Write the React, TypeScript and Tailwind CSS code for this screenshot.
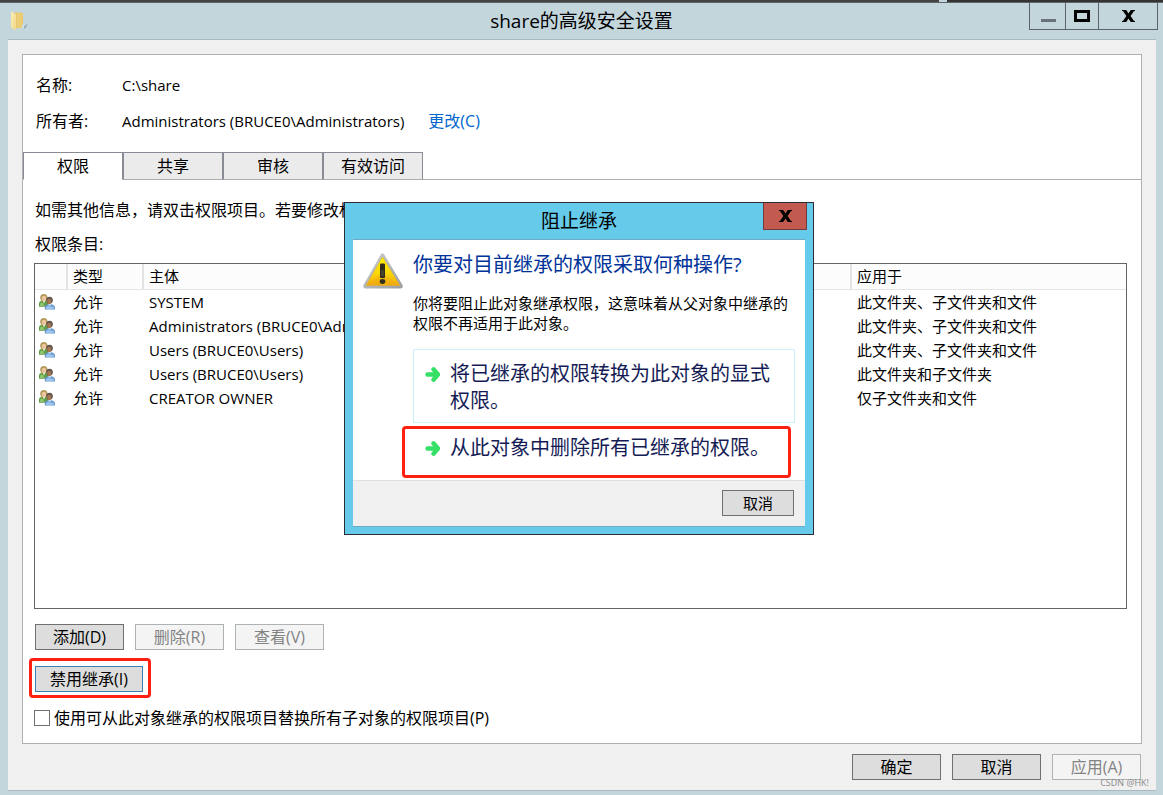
import { useState } from "react";

type Entry = {
  type: string;
  principal: string;
  appliesTo: string;
};

const entries: Entry[] = [
  { type: "允许", principal: "SYSTEM", appliesTo: "此文件夹、子文件夹和文件" },
  { type: "允许", principal: "Administrators (BRUCE0\\Administrators)", appliesTo: "此文件夹、子文件夹和文件" },
  { type: "允许", principal: "Users (BRUCE0\\Users)", appliesTo: "此文件夹、子文件夹和文件" },
  { type: "允许", principal: "Users (BRUCE0\\Users)", appliesTo: "此文件夹和子文件夹" },
  { type: "允许", principal: "CREATOR OWNER", appliesTo: "仅子文件夹和文件" },
];

const tabs = ["权限", "共享", "审核", "有效访问"];

const FolderIcon: React.FC = () => (
  <svg width="18" height="20" viewBox="0 0 18 20" aria-hidden="true">
    <defs>
      <linearGradient id="folder-back" x1="0" y1="0" x2="1" y2="0">
        <stop offset="0" stopColor="#dcbd66" />
        <stop offset="0.35" stopColor="#eed07a" />
        <stop offset="1" stopColor="#e9c968" />
      </linearGradient>
      <linearGradient id="folder-front" x1="0" y1="0" x2="1" y2="1">
        <stop offset="0" stopColor="#faedb0" />
        <stop offset="1" stopColor="#f0d988" />
      </linearGradient>
    </defs>
    <path d="M11 17.500l5.500-5-1.500 4-3 1.800z" fill="#93a7b0" />
    <path d="M4 1l8 1v14.500l-7.500 1z" fill="url(#folder-back)" />
    <path d="M0 0.500L5 3v16.200L0 16.500z" fill="url(#folder-front)" />
    <path d="M11 13.500l2 .5v3.500l-2 .5z" fill="#cfe0ea" />
  </svg>
);

const UsersIcon: React.FC = () => (
  <svg width="16" height="16" viewBox="0 0 16 16" aria-hidden="true" className="block">
    <path d="M0 12.800V9.800C0 8 1.200 7 3 6.800h3.500l2.500 2v4z" fill="#5f9c43" />
    <path d="M1 12V9.800l1.500-1.600L5 9.500V12z" fill="#8dc56c" />
    <ellipse cx="4.800" cy="3.700" rx="3.600" ry="3.700" fill="#b3985a" />
    <ellipse cx="5" cy="4.600" rx="2.200" ry="2.800" fill="#ecc69e" />
    <path d="M3.800 7h2.400L5.300 9.200z" fill="#e6efdc" />
    <path d="M5.800 15.600v-2c0-2 1.400-3 3.200-3.400h3.500c2 .4 3.500 1.600 3.500 3.400v2z" fill="#6496cf" />
    <path d="M7 15v-1.800l2-1.700 3 1.300 2.500-.3.500 2.500z" fill="#9cc3ec" />
    <ellipse cx="10.500" cy="6.200" rx="3.300" ry="3.400" fill="#5f544c" />
    <ellipse cx="10.300" cy="7.400" rx="2.100" ry="2.700" fill="#a57450" />
    <path d="M9.300 10.200h2.900l-1.200 2z" fill="#dfeaf6" />
  </svg>
);

const WarningIcon: React.FC = () => (
  <svg width="40" height="36" viewBox="0 0 40 36" aria-hidden="true" className="block">
    <defs>
      <linearGradient id="warn-fill" x1="0" y1="0" x2="0" y2="1">
        <stop offset="0" stopColor="#fdf000" />
        <stop offset="0.55" stopColor="#fbd808" />
        <stop offset="1" stopColor="#f0aa10" />
      </linearGradient>
      <linearGradient id="warn-edge" x1="0" y1="0" x2="1" y2="1">
        <stop offset="0" stopColor="#cfd2d4" />
        <stop offset="1" stopColor="#9a9da0" />
      </linearGradient>
    </defs>
    <path d="M17.800 1.500q1.700-2.400 3.400 0L39.500 32q1 3.200-2 3.500h-35Q-.5 35.200.5 32z" fill="url(#warn-edge)" />
    <path d="M19.500 4L37 32.500H3z" fill="url(#warn-fill)" stroke="#e0b020" strokeWidth="0.500" />
    <path d="M19.500 20L36 32H3.600z" fill="#f0a30c" opacity="0.300" />
    <rect x="17" y="10.500" width="5" height="14.500" rx="1" fill="#2f2c1c" />
    <rect x="18" y="17" width="3" height="6" fill="#5b5a3c" opacity="0.500" />
    <ellipse cx="19.500" cy="28.500" rx="2.800" ry="2.400" fill="#33301e" />
  </svg>
);

const ArrowIcon: React.FC = () => (
  <svg width="16" height="16" viewBox="0 0 16 16" aria-hidden="true" className="block">
    <path d="M3.500 8.500h9M9.500 3.300L14 8.500l-4.500 5.200" fill="none" stroke="#36e066" strokeWidth="4.400" strokeLinecap="round" strokeLinejoin="round" />
  </svg>
);

const CrossIcon: React.FC = () => (
  <svg width="13" height="12" viewBox="0 0 13 12" aria-hidden="true">
    <path d="M0 0h4.300l2.200 3.400L8.700 0H13v1h-1L8.600 6l3.400 5h1v1H8.700L6.500 8.600 4.300 12H0v-1h1l3.400-5L1 1H0z" fill="#000" />
  </svg>
);

type PushButtonProps = {
  children: React.ReactNode;
  disabled?: boolean;
  className?: string;
};

const PushButton: React.FC<PushButtonProps> = ({ children, disabled, className = "w-[89px] border-[#707070]" }) => (
  <button
    type="button"
    disabled={disabled}
    className={`h-[26px] border bg-[#dddddd] leading-6 disabled:border-[#adb2b5] disabled:bg-[#f4f4f4] disabled:text-[#838383] ${className}`}
  >
    {children}
  </button>
);

const InheritanceDialog: React.FC = () => (
  <div
    role="dialog"
    aria-labelledby="dialog-title"
    className="absolute left-[344px] top-[202px] w-[470px] border border-[#2b2d33] bg-[#66caea] px-2 pb-[7px]"
  >
    <div className="relative flex h-9 items-center justify-center">
      <h2 id="dialog-title" className="text-[19px] leading-6">阻止继承</h2>
      <button
        type="button"
        aria-label="关闭"
        className="absolute -right-0.5 top-0 flex h-[27px] w-11 items-center justify-center border border-t-0 border-[#733a3a] bg-[#c35a50]"
      >
        <CrossIcon />
      </button>
    </div>

    <div className="border-y border-[#6fa9c4] bg-white">
      <div className="flex gap-2.5 pb-[3px] pl-2.5 pr-2.5 pt-[13px]">
        <div>
          <WarningIcon />
        </div>
        <div className="min-w-0 flex-1">
          <h3 className="text-xl leading-6 text-[#003399]">你要对目前继承的权限采取何种操作?</h3>
          <p className="mt-4 text-[15px] leading-5">
            你将要阻止此对象继承权限，这意味着从父对象中继承的权限不再适用于此对象。
          </p>
          <button
            type="button"
            className="mt-4 flex w-full gap-2.5 border border-[#ccf3fa] px-2.5 pb-2 pt-2.5 text-left text-xl leading-[27px] text-[#151c55]"
          >
            <span className="pt-1.5">
              <ArrowIcon />
            </span>
            <span>将已继承的权限转换为此对象的显式权限。</span>
          </button>
          <div className="relative">
            <button
              type="button"
              className="flex w-full gap-2.5 border border-transparent px-2.5 pb-[15px] pt-2.5 text-left text-xl leading-[27px] text-[#151c55]"
            >
              <span className="pt-1.5">
                <ArrowIcon />
              </span>
              <span>从此对象中删除所有已继承的权限。</span>
            </button>
            {/* Highlight frame */}
            <div className="pointer-events-none absolute -left-[11px] right-1 top-[3px] h-[52px] rounded border-3 border-[#ff2010]" />
          </div>
        </div>
      </div>
      <div className="flex justify-end border-t border-[#dfdfdf] bg-[#f0f0f0] px-[11px] pb-2.5 pt-[9px] text-[15px]">
        <PushButton className="w-[72px] border-[#707070]">取消</PushButton>
      </div>
    </div>
  </div>
);

const App: React.FC = () => {
  const [activeTab, setActiveTab] = useState("权限");
  const [replaceAll, setReplaceAll] = useState(false);

  return (
    <div className="relative flex min-h-screen flex-col bg-[#c3d6dc] font-['Open_Sans','Noto_Sans_CJK_SC',sans-serif] text-[15px] text-black">
      {/* Edge of the desktop behind the window */}
      <div className="flex h-[3px] border-b border-[#5e626b] bg-[#333333]">
        <div className="w-[939px] bg-[#444444]" />
        <div className="w-2 bg-[#c3d6dc]" />
      </div>

      {/* Title bar */}
      <header className="relative flex h-9 items-center justify-center">
        <div className="absolute left-[11px] top-2">
          <FolderIcon />
        </div>
        <h1 className="text-[19px] leading-6">share的高级安全设置</h1>
        <div className="absolute right-[5px] top-0 flex h-[27px] border border-t-0 border-[#5e626b]">
          <button type="button" aria-label="最小化" className="flex w-[35px] items-end justify-end pb-[7px] pr-[9px]">
            <span className="h-[3px] w-[15px] bg-[#6a7478]" />
          </button>
          <button type="button" aria-label="最大化" className="flex w-[34px] items-center justify-center border-x border-[#5e626b]">
            <span className="h-3 w-4 border-3 border-black" />
          </button>
          <button type="button" aria-label="关闭" className="flex w-[58px] items-center justify-center">
            <CrossIcon />
          </button>
        </div>
      </header>

      <div className="mb-1 ml-2 mr-[7px] flex flex-1 flex-col border-y border-[#a9b9bf] bg-[#f0f0f0] px-3.5 pb-2.5 pt-3.5">
        <main className="flex flex-1 flex-col border border-[#b0b0b0] bg-white">
          <dl className="grid grid-cols-[86px_1fr] gap-y-3 px-[13px] pb-[19px] pt-[18px] leading-6">
            <dt className="text-base leading-6">名称:</dt>
            <dd>C:\share</dd>
            <dt className="text-base leading-6">所有者:</dt>
            <dd className="flex gap-6">
              Administrators (BRUCE0\Administrators)
              <a href="#change" className="text-base leading-6 text-[#0066cc]">更改(C)</a>
            </dd>
          </dl>

          <div role="tablist" className="flex text-base">
            {tabs.map((tab) => (
              <button
                key={tab}
                type="button"
                role="tab"
                aria-selected={tab === activeTab}
                onClick={() => setActiveTab(tab)}
                className="h-7 w-[100px] border border-b-[#adadad] border-l-[#898c95] border-r-[#898c95] border-t-[#898c95] bg-[#ebebeb] leading-6 aria-selected:border-b-white aria-selected:bg-white"
              >
                {tab}
              </button>
            ))}
            <div className="flex-1 border-b border-[#adadad]" />
          </div>

          <div className="flex flex-1 flex-col pb-[13px] pl-[11px] pr-3.5 pt-[18px]">
            <p className="pl-px text-base leading-6">如需其他信息，请双击权限项目。若要修改权</p>
            <p className="mt-2.5 pl-px text-base leading-6">权限条目:</p>

            <div className="mt-[7px] flex-1 border border-[#646464]">
              <table className="w-full table-fixed border-collapse text-left">
                <thead className="bg-[#fcfcfc]">
                  <tr className="h-[25px] border-b border-[#e5e5e5] leading-6">
                    <th className="w-8 border-r-2 border-[#e3e3e3]" aria-label="图标" />
                    <th className="w-[76px] border-r-2 border-[#e3e3e3] pl-[5px] font-normal">类型</th>
                    <th className="border-r-2 border-[#e3e3e3] pl-[5px] font-normal">主体</th>
                    <th className="w-[275px] pl-[5px] font-normal">应用于</th>
                  </tr>
                </thead>
                <tbody>
                  {entries.map((entry, index) => (
                    <tr key={index} className="h-6 leading-6">
                      <td className="pl-1">
                        <UsersIcon />
                      </td>
                      <td className="pl-1.5">{entry.type}</td>
                      <td className="pl-1.5">{entry.principal}</td>
                      <td className="pl-1.5">{entry.appliesTo}</td>
                    </tr>
                  ))}
                </tbody>
              </table>
            </div>

            <div className="mt-[15px] flex gap-[11px] pl-px text-base">
              <PushButton>添加(D)</PushButton>
              <PushButton disabled>删除(R)</PushButton>
              <PushButton disabled>查看(V)</PushButton>
            </div>

            <div className="relative mt-4 flex pl-px text-base">
              <PushButton className="w-[108px] border-[#3c7fb1]">禁用继承(I)</PushButton>
              {/* Highlight frame */}
              <div className="pointer-events-none absolute -left-[5px] -top-2 h-10 w-[122px] rounded border-3 border-[#ff2010]" />
            </div>

            <label className="mt-3.5 flex items-center gap-1 text-base leading-6">
              <input
                type="checkbox"
                checked={replaceAll}
                onChange={(event) => setReplaceAll(event.target.checked)}
                className="size-4 appearance-none border border-[#707070] bg-white checked:bg-[#3c7fb1]"
              />
              使用可从此对象继承的权限项目替换所有子对象的权限项目(P)
            </label>
          </div>
        </main>

        <div className="mt-2.5 flex justify-end gap-[11px] pr-px text-base">
          <PushButton>确定</PushButton>
          <PushButton>取消</PushButton>
          <PushButton disabled>应用(A)</PushButton>
        </div>
      </div>

      <InheritanceDialog />

      <span className="absolute bottom-1.5 right-3.5 text-[9px] leading-3 text-[#8a8a8a]">CSDN @HK!</span>
    </div>
  );
};

export default App;
